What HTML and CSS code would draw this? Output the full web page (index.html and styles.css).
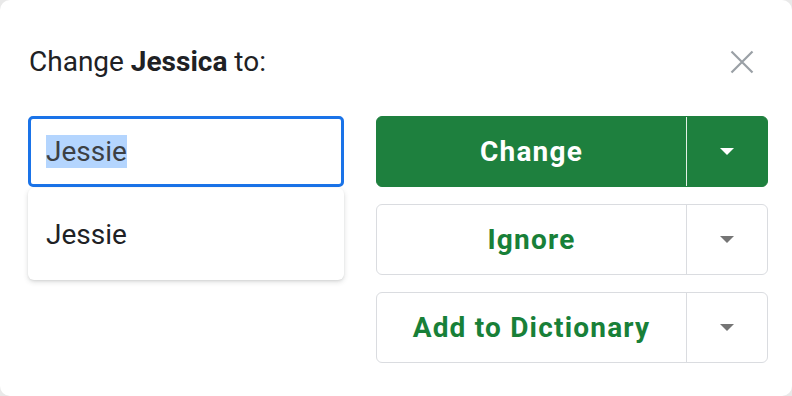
FILE: index.html
```html
<!DOCTYPE html>
<html>
<head>
<meta charset="utf-8">
<link rel="stylesheet" href="styles.css">
</head>
<body>
<div class="dialog">
  <div class="header">
    <div class="title">Change <b>Jessica</b> to:</div>
    <div class="close" aria-label="Close">
      <svg width="24" height="24" viewBox="0 0 24 24"><path d="M1.5 1.5 L22.5 22.5 M22.5 1.5 L1.5 22.5" stroke="#9aa0a6" stroke-width="2.2" fill="none"/></svg>
    </div>
  </div>
  <div class="body">
    <div class="left">
      <div class="input"><span class="sel">Jessie</span></div>
      <div class="menu"><div class="item">Jessie</div></div>
    </div>
    <div class="right">
      <div class="btn primary">
        <div class="label">Change</div>
        <div class="split"><span class="tri"></span></div>
      </div>
      <div class="btn">
        <div class="label">Ignore</div>
        <div class="split"><span class="tri"></span></div>
      </div>
      <div class="btn">
        <div class="label">Add to Dictionary</div>
        <div class="split"><span class="tri"></span></div>
      </div>
    </div>
  </div>
</div>
</body>
</html>
```
FILE: styles.css
```css
html, body {
  margin: 0;
  padding: 0;
  background: #e9e9e9;
}
.dialog {
  width: 792px;
  height: 396px;
  box-sizing: border-box;
  padding: 40px 24px 0 28px;
  background: #fff;
  border-radius: 10px;
  font-family: Roboto, "Liberation Sans", sans-serif;
  color: #202124;
}
.header {
  display: flex;
  justify-content: space-between;
  align-items: center;
  height: 44px;
  margin-bottom: 32px;
}
.title {
  font-size: 28px;
  line-height: 44px;
  padding-left: 1px;
}
.title b {
  font-weight: 700;
}
.close {
  width: 24px;
  height: 24px;
  margin-right: 14px;
  display: flex;
}
.body {
  display: grid;
  grid-template-columns: 316px 392px;
  column-gap: 32px;
}
.input {
  height: 71px;
  box-sizing: border-box;
  border: 3px solid #1a73e8;
  border-radius: 5px;
  padding-left: 15px;
  font-size: 28px;
  line-height: 65px;
  color: #3c4043;
}
.sel {
  background: #b4d5fe;
}
.menu {
  margin-top: 1px;
  height: 92px;
  border-radius: 6px;
  background: #fff;
  box-shadow: 0 2px 5px rgba(60, 64, 67, 0.18), 0 1px 2px rgba(60, 64, 67, 0.08);
  display: flex;
  align-items: center;
}
.item {
  padding-left: 18px;
  font-size: 28px;
  color: #202124;
}
.right {
  display: flex;
  flex-direction: column;
  gap: 17px;
}
.btn {
  height: 71px;
  box-sizing: border-box;
  display: flex;
  border: 1.5px solid #dadce0;
  border-radius: 6px;
  color: #188038;
}
.btn.primary {
  background: #1e803e;
  border-color: #1e803e;
  color: #fff;
}
.label {
  flex: 1;
  display: flex;
  align-items: center;
  justify-content: center;
  font-size: 28px;
  font-weight: 700;
  letter-spacing: 1.2px;
  border-right: 1.5px solid #dadce0;
}
.primary .label {
  border-right-color: #e3f0e6;
}
.split {
  width: 80px;
  display: flex;
  align-items: center;
  justify-content: center;
}
.tri {
  width: 0;
  height: 0;
  border-left: 7.5px solid transparent;
  border-right: 7.5px solid transparent;
  border-top: 7.5px solid #757575;
}
.primary .tri {
  border-top-color: #fff;
}
```
